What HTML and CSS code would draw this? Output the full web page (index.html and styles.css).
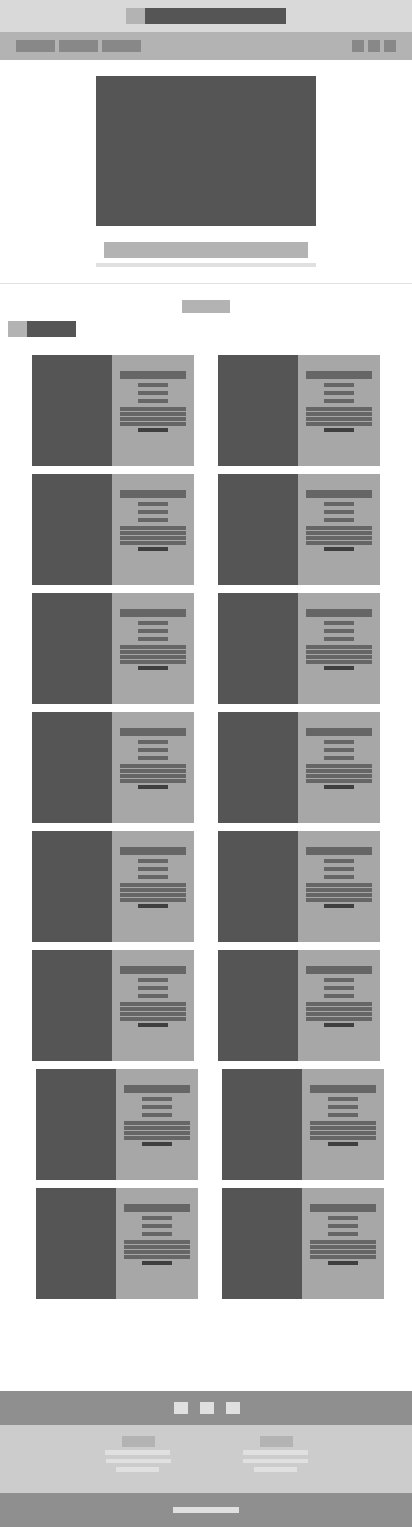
FILE: index.html
```html
<!DOCTYPE html>
<html lang="en">
<head>
<meta charset="utf-8">
<title>Wireframe</title>
<link rel="stylesheet" href="styles.css">
</head>
<body>
<header class="top">
  <div class="logo"><span class="logo-mark"></span><span class="logo-text"></span></div>
</header>
<nav class="nav">
  <div class="nav-links"><span class="nav-link"></span><span class="nav-link"></span><span class="nav-link"></span></div>
  <div class="nav-icons"><span class="nav-icon"></span><span class="nav-icon"></span><span class="nav-icon"></span></div>
</nav>
<section class="hero">
  <div class="hero-img"></div>
  <div class="hero-title"></div>
  <div class="hero-sub"></div>
</section>
<hr class="divider">
<section class="products">
  <div class="sec-title"></div>
  <div class="tab"><span class="tab-mark"></span><span class="tab-text"></span></div>
  <div class="grid">
    <div class="card"><div class="card-img"></div><div class="card-body"><div class="c-title"></div><div class="c-line"></div><div class="c-line"></div><div class="c-line"></div><div class="c-para"><span></span><span></span><span></span><span></span></div><div class="c-btn"></div></div></div>
    <div class="card"><div class="card-img"></div><div class="card-body"><div class="c-title"></div><div class="c-line"></div><div class="c-line"></div><div class="c-line"></div><div class="c-para"><span></span><span></span><span></span><span></span></div><div class="c-btn"></div></div></div>
    <div class="card"><div class="card-img"></div><div class="card-body"><div class="c-title"></div><div class="c-line"></div><div class="c-line"></div><div class="c-line"></div><div class="c-para"><span></span><span></span><span></span><span></span></div><div class="c-btn"></div></div></div>
    <div class="card"><div class="card-img"></div><div class="card-body"><div class="c-title"></div><div class="c-line"></div><div class="c-line"></div><div class="c-line"></div><div class="c-para"><span></span><span></span><span></span><span></span></div><div class="c-btn"></div></div></div>
    <div class="card"><div class="card-img"></div><div class="card-body"><div class="c-title"></div><div class="c-line"></div><div class="c-line"></div><div class="c-line"></div><div class="c-para"><span></span><span></span><span></span><span></span></div><div class="c-btn"></div></div></div>
    <div class="card"><div class="card-img"></div><div class="card-body"><div class="c-title"></div><div class="c-line"></div><div class="c-line"></div><div class="c-line"></div><div class="c-para"><span></span><span></span><span></span><span></span></div><div class="c-btn"></div></div></div>
    <div class="card"><div class="card-img"></div><div class="card-body"><div class="c-title"></div><div class="c-line"></div><div class="c-line"></div><div class="c-line"></div><div class="c-para"><span></span><span></span><span></span><span></span></div><div class="c-btn"></div></div></div>
    <div class="card"><div class="card-img"></div><div class="card-body"><div class="c-title"></div><div class="c-line"></div><div class="c-line"></div><div class="c-line"></div><div class="c-para"><span></span><span></span><span></span><span></span></div><div class="c-btn"></div></div></div>
    <div class="card"><div class="card-img"></div><div class="card-body"><div class="c-title"></div><div class="c-line"></div><div class="c-line"></div><div class="c-line"></div><div class="c-para"><span></span><span></span><span></span><span></span></div><div class="c-btn"></div></div></div>
    <div class="card"><div class="card-img"></div><div class="card-body"><div class="c-title"></div><div class="c-line"></div><div class="c-line"></div><div class="c-line"></div><div class="c-para"><span></span><span></span><span></span><span></span></div><div class="c-btn"></div></div></div>
    <div class="card"><div class="card-img"></div><div class="card-body"><div class="c-title"></div><div class="c-line"></div><div class="c-line"></div><div class="c-line"></div><div class="c-para"><span></span><span></span><span></span><span></span></div><div class="c-btn"></div></div></div>
    <div class="card"><div class="card-img"></div><div class="card-body"><div class="c-title"></div><div class="c-line"></div><div class="c-line"></div><div class="c-line"></div><div class="c-para"><span></span><span></span><span></span><span></span></div><div class="c-btn"></div></div></div>
  </div>
  <div class="grid grid-shift">
    <div class="card"><div class="card-img"></div><div class="card-body"><div class="c-title"></div><div class="c-line"></div><div class="c-line"></div><div class="c-line"></div><div class="c-para"><span></span><span></span><span></span><span></span></div><div class="c-btn"></div></div></div>
    <div class="card"><div class="card-img"></div><div class="card-body"><div class="c-title"></div><div class="c-line"></div><div class="c-line"></div><div class="c-line"></div><div class="c-para"><span></span><span></span><span></span><span></span></div><div class="c-btn"></div></div></div>
    <div class="card"><div class="card-img"></div><div class="card-body"><div class="c-title"></div><div class="c-line"></div><div class="c-line"></div><div class="c-line"></div><div class="c-para"><span></span><span></span><span></span><span></span></div><div class="c-btn"></div></div></div>
    <div class="card"><div class="card-img"></div><div class="card-body"><div class="c-title"></div><div class="c-line"></div><div class="c-line"></div><div class="c-line"></div><div class="c-para"><span></span><span></span><span></span><span></span></div><div class="c-btn"></div></div></div>
  </div>
</section>
<footer class="footer">
  <div class="f-social"><span></span><span></span><span></span></div>
  <div class="f-cols">
    <div class="f-col"><div class="f-head"></div><div class="f-l1"></div><div class="f-l2 f-nudge"></div><div class="f-l3"></div></div>
    <div class="f-col"><div class="f-head"></div><div class="f-l1"></div><div class="f-l2"></div><div class="f-l3"></div></div>
  </div>
  <div class="f-bottom"><span class="f-copy"></span></div>
</footer>
</body>
</html>
```

FILE: styles.css
```css
* { box-sizing: border-box; }
body {
  margin: 0;
  background: #ffffff;
  font-family: "Liberation Sans", Arial, sans-serif;
}
.top {
  background: #d9d9d9;
  height: 32px;
  padding-top: 8px;
  display: flex;
  justify-content: center;
}
.logo { display: flex; height: 16px; }
.logo-mark { width: 19px; background: #b3b3b3; }
.logo-text { width: 141px; background: #555555; }

.nav {
  background: #b3b3b3;
  height: 28px;
  padding: 8px 16px;
  display: flex;
  justify-content: space-between;
}
.nav-links { display: flex; gap: 4px; }
.nav-link { width: 39px; height: 12px; background: #888888; }
.nav-icons { display: flex; gap: 4px; }
.nav-icon { width: 12px; height: 12px; background: #888888; }

.hero {
  padding-top: 16px;
  display: flex;
  flex-direction: column;
  align-items: center;
}
.hero-img { width: 220px; height: 150px; background: #555555; }
.hero-title { width: 204px; height: 16px; background: #b3b3b3; margin-top: 16px; }
.hero-sub { width: 220px; height: 4px; background: #e0e0e0; margin-top: 5px; }
.divider {
  border: 0;
  height: 1px;
  background: #e2e2e2;
  margin: 16px 0 0;
}

.products { padding-top: 16px; }
.sec-title { width: 48px; height: 13px; background: #b3b3b3; margin: 0 auto; }
.tab { display: flex; height: 16px; margin: 8px 0 0 8px; }
.tab-mark { width: 19px; background: #b3b3b3; }
.tab-text { width: 49px; background: #555555; }

.grid {
  display: grid;
  grid-template-columns: 162px 162px;
  column-gap: 24px;
  row-gap: 8px;
  padding-left: 32px;
  margin-top: 18px;
}
.grid-shift { padding-left: 36px; margin-top: 8px; }
.card { display: flex; height: 111px; }
.card-img { width: 80px; background: #555555; }
.card-body {
  width: 82px;
  background: #a7a7a7;
  padding-top: 16px;
  display: flex;
  flex-direction: column;
  align-items: center;
}
.c-title { width: 66px; height: 8px; background: #666666; margin-bottom: 4px; }
.c-line { width: 30px; height: 4px; background: #666666; margin-bottom: 4px; }
.c-para { display: flex; flex-direction: column; gap: 1px; }
.c-para span { display: block; width: 66px; height: 4px; background: #666666; }
.c-btn { width: 30px; height: 4px; background: #3f3f3f; margin-top: 2px; }

.footer { margin-top: 92px; }
.f-social {
  background: #8f8f8f;
  height: 34px;
  padding-top: 11px;
  display: flex;
  justify-content: center;
  gap: 12px;
  padding-left: 2px;
}
.f-social span { width: 14px; height: 12px; background: #e0e0e0; }
.f-cols {
  background: #cccccc;
  height: 68px;
  padding-top: 11px;
  display: flex;
  justify-content: center;
  gap: 68px;
}
.f-col { width: 70px; display: flex; flex-direction: column; align-items: center; }
.f-head { width: 33px; height: 11px; background: #b3b3b3; margin-left: 2px; }
.f-l1 { width: 65px; height: 5px; background: #e0e0e0; margin-top: 3px; }
.f-l2 { width: 65px; height: 4px; background: #e0e0e0; margin-top: 4px; }
.f-nudge { margin-left: 2px; }
.f-l3 { width: 43px; height: 5px; background: #e0e0e0; margin-top: 4px; }
.f-bottom {
  background: #8f8f8f;
  height: 34px;
  padding-top: 14px;
  display: flex;
  justify-content: center;
}
.f-copy { width: 66px; height: 6px; background: #e0e0e0; }
```
